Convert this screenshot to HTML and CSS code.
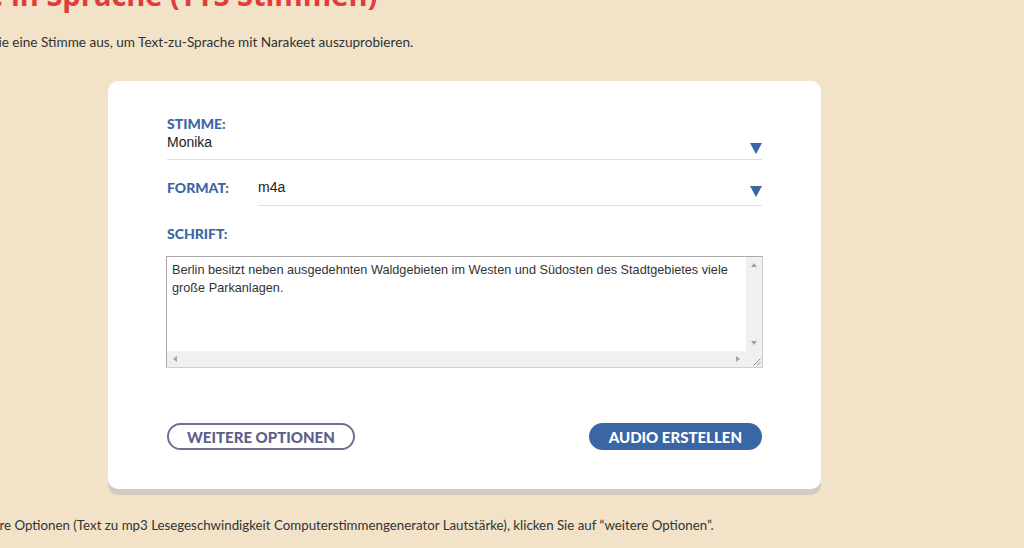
FILE: index.html
```html
<!DOCTYPE html>
<html lang="de">
<head>
    <meta charset="UTF-8">
    <title>Texte in Sprache (TTS Stimmen)</title>
    <link rel="stylesheet" href="styles.css">
</head>
<body>
    <div class="page">
        <h1 class="title">Texte in Sprache (TTS Stimmen)</h1>
        <p class="intro">Wählen Sie eine Stimme aus, um Text-zu-Sprache mit Narakeet auszuprobieren.</p>

        <div class="card">
            <div class="field">
                <label class="label" for="voice">Stimme:</label>
                <div class="select select-voice">
                    <select id="voice">
                        <option>Monika</option>
                    </select>
                    <svg class="arrow" width="12" height="11" viewBox="0 0 12 11"><path d="M0 0H12L6 11Z" fill="#3b66a6"/></svg>
                </div>
            </div>

            <div class="field field-row">
                <label class="label label-format" for="format">Format:</label>
                <div class="select select-format">
                    <select id="format">
                        <option>m4a</option>
                    </select>
                    <svg class="arrow" width="12" height="11" viewBox="0 0 12 11"><path d="M0 0H12L6 11Z" fill="#3b66a6"/></svg>
                </div>
            </div>

            <div class="field">
                <label class="label label-text" for="script">Schrift:</label>
                <div class="textbox">
                    <textarea id="script" class="script" wrap="soft">Berlin besitzt neben ausgedehnten Waldgebieten im Westen und Südosten des Stadtgebietes viele große Parkanlagen.</textarea>
                    <div class="vbar">
                        <span class="sb-btn"><i class="tri tri-up"></i></span>
                        <span class="sb-btn"><i class="tri tri-down"></i></span>
                    </div>
                    <div class="hbar">
                        <span class="sb-btn"><i class="tri tri-left"></i></span>
                        <span class="sb-btn"><i class="tri tri-right"></i></span>
                    </div>
                    <div class="grip">
                        <svg width="16" height="16" viewBox="0 0 16 16"><path d="M14.5 7.5L7.5 14.5M14.5 11L11 14.5" stroke="#8c8c8c" stroke-width="1"/></svg>
                    </div>
                </div>
            </div>

            <div class="actions">
                <button class="btn btn-outline">Weitere Optionen</button>
                <button class="btn btn-primary">Audio erstellen</button>
            </div>
        </div>

        <p class="note">Für weitere Optionen (Text zu mp3 Lesegeschwindigkeit Computerstimmengenerator Lautstärke), klicken Sie auf “weitere Optionen”.</p>
    </div>
</body>
</html>
```

FILE: styles.css
```css
body {
    margin: 0;
    background-color: #f1e2c8;
    font-family: Lato, "Open Sans", sans-serif;
    color: #333;
    overflow: hidden;
}

.page {
    margin-top: -25px;
    margin-left: -55px;
}

.title {
    margin: 0 0 17px -22px;
    font-family: "Open Sans", sans-serif;
    font-size: 29px;
    line-height: 40px;
    font-weight: 700;
    color: #e23b3b;
    white-space: nowrap;
}

.intro {
    margin: 0 0 29px -3px;
    font-size: 13.6px;
    line-height: 20px;
    white-space: nowrap;
}

.card {
    box-sizing: border-box;
    width: 713px;
    margin-left: 163px;
    padding: 35px 59px 39px;
    background-color: #fff;
    border-radius: 10px;
    box-shadow: 0 6px 0 #d4cbbf;
}

.label {
    display: block;
    font-size: 14px;
    line-height: 16px;
    font-weight: 900;
    color: #3b66a6;
    text-transform: uppercase;
}

.select {
    display: flex;
    align-items: flex-end;
    border-bottom: 1px solid #dedede;
}

.select select {
    flex: 1;
    margin: 0;
    padding: 0;
    border: none;
    background: none;
    outline: none;
    font-family: Arial, "Liberation Sans", sans-serif;
    font-size: 14px;
    line-height: 18px;
    color: #222;
    -webkit-appearance: none;
    appearance: none;
}

.select-voice {
    margin-top: 1px;
    padding-bottom: 5px;
}

.select-voice select {
    height: 21px;
    padding-bottom: 3px;
}

.field-row {
    display: flex;
    align-items: flex-start;
    margin-top: 18px;
}

.label-format {
    width: 91px;
    padding-top: 2px;
}

.select-format {
    flex: 1;
    padding-bottom: 8px;
}

.select-format select {
    height: 19px;
    padding-bottom: 1px;
}

.arrow {
    flex: none;
    display: block;
}

.label-text {
    margin-top: 20px;
    margin-bottom: 14px;
}

/* textarea with classic scrollbars drawn around it */
.textbox {
    display: grid;
    grid-template-columns: 1fr 16px;
    grid-template-rows: 1fr 16px;
    width: calc(100% + 2px);
    height: 112px;
    box-sizing: border-box;
    margin-left: -1px;
    border: 1px solid #a9a9a9;
    border-bottom-color: #cfcfcf;
    border-right-color: #cfcfcf;
    background-color: #fff;
}

.script {
    display: block;
    box-sizing: border-box;
    width: 100%;
    height: 100%;
    margin: 0;
    padding: 4px 5px;
    border: none;
    outline: none;
    font-family: Arial, "Liberation Sans", sans-serif;
    font-size: 12.7px;
    line-height: 18px;
    color: #333;
    overflow: hidden;
    resize: none;
}

.vbar,
.hbar {
    display: flex;
    justify-content: space-between;
    background-color: #f0f0f0;
}

.vbar {
    flex-direction: column;
}

.sb-btn {
    display: flex;
    align-items: center;
    justify-content: center;
    width: 16px;
    height: 16px;
}

.tri {
    width: 0;
    height: 0;
    border: 3px solid transparent;
}

.tri-up {
    border-top: 0;
    border-bottom: 4px solid #a3a3a3;
}

.tri-down {
    border-bottom: 0;
    border-top: 4px solid #a3a3a3;
}

.tri-left {
    border-left: 0;
    border-right: 4px solid #a3a3a3;
}

.tri-right {
    border-right: 0;
    border-left: 4px solid #a3a3a3;
}

.grip {
    background-color: #f0f0f0;
}

.grip svg {
    display: block;
}

.actions {
    display: flex;
    justify-content: space-between;
    margin-top: 55px;
}

.btn {
    box-sizing: border-box;
    height: 27px;
    border-radius: 14px;
    font-family: Lato, sans-serif;
    font-size: 15px;
    font-weight: 900;
    text-transform: uppercase;
    cursor: pointer;
}

.btn-outline {
    padding: 0 18px;
    background-color: #fff;
    border: 2px solid #6c7196;
    color: #5b6189;
}

.btn-primary {
    padding: 0 20px;
    background-color: #3b66a6;
    border: none;
    color: #fff;
}

.note {
    margin: 26px 0 0;
    font-size: 13.3px;
    line-height: 20px;
    white-space: nowrap;
}
```
